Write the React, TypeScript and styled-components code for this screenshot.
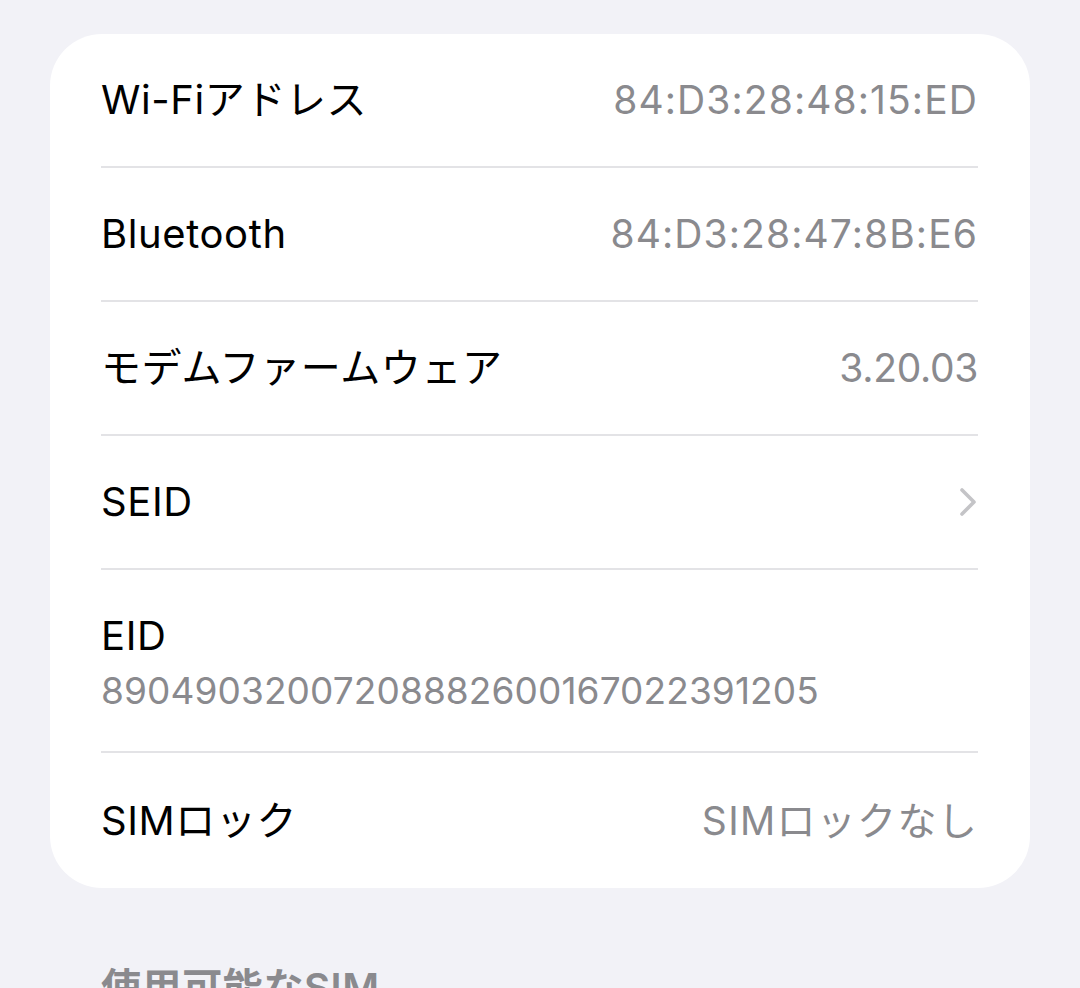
import React from 'react';
import styled, { createGlobalStyle } from 'styled-components';

const GlobalStyle = createGlobalStyle`
  html, body {
    margin: 0;
    padding: 0;
    background: #f2f2f7;
  }
  body {
    font-family: Inter, "Noto Sans CJK JP", sans-serif;
    -webkit-font-smoothing: antialiased;
  }
`;

const Page = styled.div`
  height: 988px;
  overflow: hidden;
  padding: 34px 50px 0;
  box-sizing: border-box;
`;

const Card = styled.div`
  background: #ffffff;
  border-radius: 52px;
  padding: 0 52px 0 51px;
`;

const Row = styled.div<{ $last?: boolean }>`
  display: flex;
  align-items: center;
  justify-content: space-between;
  height: ${({ $last }) => ($last ? '135px' : '132px')};
  border-bottom: ${({ $last }) => ($last ? 'none' : '2px solid #e3e3e6')};
`;

const StackedRow = styled.div`
  display: flex;
  flex-direction: column;
  gap: 7px;
  padding: 42px 0 36px;
  border-bottom: 2px solid #e3e3e6;
`;

const Label = styled.span`
  font-size: 40px;
  line-height: 48px;
  color: #000000;
  letter-spacing: 0.6px;
`;

const Value = styled.span<{ $spacing: number }>`
  font-size: 39px;
  line-height: 48px;
  color: #8a8a8e;
  letter-spacing: ${({ $spacing }) => $spacing}px;
`;

const LongValue = styled.span`
  font-size: 37px;
  line-height: 48px;
  color: #8a8a8e;
  letter-spacing: 0.1px;
`;

const Chevron = styled.svg`
  width: 18px;
  height: 30px;
  margin-right: 1px;
`;

const SectionHeader = styled.div`
  margin: 76px 0 0 51px;
  font-size: 40px;
  font-weight: 600;
  color: #8a8a8e;
  line-height: 48px;
  letter-spacing: 0.6px;
`;

const rows = [
  { label: 'Wi-Fiアドレス', value: '84:D3:28:48:15:ED', spacing: 1.1 },
  { label: 'Bluetooth', value: '84:D3:28:47:8B:E6', spacing: 1.1 },
  { label: 'モデムファームウェア', value: '3.20.03', spacing: -0.3 },
];

const App = (): JSX.Element => (
  <Page>
    <GlobalStyle />
    <Card>
      {rows.map((r) => (
        <Row key={r.label}>
          <Label>{r.label}</Label>
          <Value $spacing={r.spacing}>{r.value}</Value>
        </Row>
      ))}
      <Row>
        <Label>SEID</Label>
        <Chevron viewBox="0 0 18 30" fill="none">
          <path
            d="M3 3 L15 15 L3 27"
            stroke="#c4c4c7"
            strokeWidth="3.6"
            strokeLinecap="round"
            strokeLinejoin="round"
          />
        </Chevron>
      </Row>
      <StackedRow>
        <Label>EID</Label>
        <LongValue>89049032007208882600167022391205</LongValue>
      </StackedRow>
      <Row $last>
        <Label>SIMロック</Label>
        <Value $spacing={1.3}>SIMロックなし</Value>
      </Row>
    </Card>
    <SectionHeader>使用可能なSIM</SectionHeader>
  </Page>
);

export default App;
